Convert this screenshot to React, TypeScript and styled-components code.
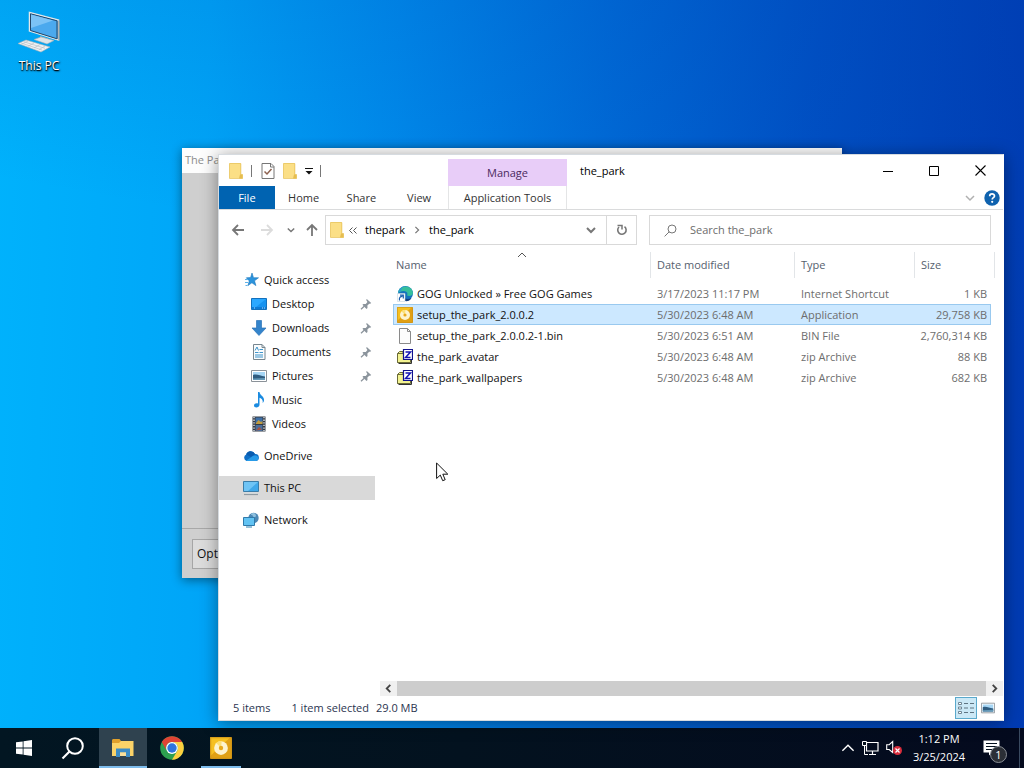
import type { ReactNode } from 'react';
import styled, { createGlobalStyle, css } from 'styled-components';

type IconProps = { size?: number };

const FolderIcon = ({ size = 16 }: IconProps) => (
  <svg width={size} height={size} viewBox="0 0 16 16">
    <path d="M1.500.500H13v11.500h1.500v3.500h-3z" fill="#f6d672" />
    <path d="M1.500.5H12.500v14.500H1.500z" fill="#fbdf86" />
    <path d="M12 11.500h2.500v4H11z" fill="#e6bd50" />
    <path d="M1.500.5H12.800v11h1.700v4H1.500z" fill="none" stroke="#e8c45c" strokeWidth=".8" />
  </svg>
);

const CheckDocIcon = () => (
  <svg width="14" height="16" viewBox="0 0 14 16">
    <path d="M1 .500h9l3 3v12H1z" fill="#fff" stroke="#767676" />
    <path d="M9.500.500v3.500H13" fill="none" stroke="#767676" />
    <path d="M3.500 8.500l2.500 2.500 4.500-5" fill="none" stroke="#8d6250" strokeWidth="1.500" />
  </svg>
);

const CustomizeIcon = () => (
  <svg width="8" height="8" viewBox="0 0 8 8">
    <path d="M0 1.500h8" stroke="#111" />
    <path d="M.500 4h7L4 7.500z" fill="#111" />
  </svg>
);

const MinimizeIcon = () => (
  <svg width="10" height="10" viewBox="0 0 10 10">
    <path d="M0 5.500h10" stroke="#000" />
  </svg>
);

const MaximizeIcon = () => (
  <svg width="10" height="10" viewBox="0 0 10 10">
    <path d="M.500.500h9v9h-9z" fill="none" stroke="#000" />
  </svg>
);

const CloseIcon = () => (
  <svg width="11" height="11" viewBox="0 0 11 11">
    <path d="M.500.500l10 10M10.500.500l-10 10" stroke="#000" strokeWidth="1.100" />
  </svg>
);

const chevrons = {
  down: 'M1 3l4 4 4-4',
  up: 'M1 7l4-4 4 4',
  left: 'M7 1L3 5l4 4',
  right: 'M3 1l4 4-4 4',
};

type ChevronProps = {
  dir: keyof typeof chevrons;
  size?: number;
  color?: string;
  weight?: number;
};

const Chevron = ({ dir, size = 10, color = '#777', weight = 1.5 }: ChevronProps) => (
  <svg width={size} height={size} viewBox="0 0 10 10">
    <path d={chevrons[dir]} fill="none" stroke={color} strokeWidth={weight} />
  </svg>
);

const HelpIcon = () => (
  <svg width="16" height="16" viewBox="0 0 16 16">
    <circle cx="8" cy="8" r="7.700" fill="#0f62ae" />
    <path
      d="M5.700 6.200c0-3 4.800-2.900 4.800-.2 0 1.700-2.300 1.700-2.300 3.500"
      fill="none"
      stroke="#fff"
      strokeWidth="1.700"
    />
    <circle cx="8.200" cy="11.800" r="1.100" fill="#fff" />
  </svg>
);

const ArrowIcon = ({ dir, color }: { dir: 'left' | 'right' | 'up'; color: string }) => {
  const paths = {
    left: 'M13 7H2M7 2L2 7l5 5',
    right: 'M1 7h11M7 2l5 5-5 5',
    up: 'M7 13V2M2 7l5-5 5 5',
  };
  return (
    <svg width="14" height="14" viewBox="0 0 14 14">
      <path d={paths[dir]} fill="none" stroke={color} strokeWidth="1.800" />
    </svg>
  );
};

const DoubleLeftIcon = () => (
  <svg width="8" height="7" viewBox="0 0 8 7">
    <path d="M3.500.500l-3 3 3 3M7.500.500l-3 3 3 3" fill="none" stroke="#555" />
  </svg>
);

const RefreshIcon = () => (
  <svg width="12" height="12" viewBox="0 0 12 12">
    <path d="M3 3a4.200 4.200 0 1 0 5.500-.300" fill="none" stroke="#777" strokeWidth="1.600" />
    <path d="M1.500 1.500H6v4" fill="none" stroke="#777" strokeWidth="1.500" />
  </svg>
);

const SearchIcon = () => (
  <svg width="13" height="13" viewBox="0 0 13 13">
    <circle cx="8" cy="5" r="4" fill="none" stroke="#777" />
    <path d="M5.200 7.800L.600 12.400" stroke="#777" />
  </svg>
);

const StarIcon = () => (
  <svg width="16" height="16" viewBox="0 0 16 16">
    <path
      d="M9 1l1.500 4.700 5 .1-4 3 1.400 4.800-4-2.800-4 2.800 1.400-4.700-3-3.100 4.300-.2z"
      fill="#2b93dc"
      stroke="#1c77bd"
      strokeWidth=".6"
    />
    <path d="M2 7.500h3M2 10.500h3M2.500 13.500h2" stroke="#5fb1e8" />
  </svg>
);

const DesktopIcon = () => (
  <svg width="16" height="16" viewBox="0 0 16 16">
    <path d="M.500 2.500h15v11H.500z" fill="#1793f0" stroke="#1371bd" />
    <path d="M1 11h14v2H1z" fill="#0d7bd6" />
    <path d="M3 12h1M11 12h1M13 12h1" stroke="#b5dcff" />
    <path d="M1 3h14L5 11H1z" fill="#2ba8ff" />
  </svg>
);

const DownloadIcon = () => (
  <svg width="16" height="16" viewBox="0 0 16 16">
    <path d="M5.500.500h5v7.500h4.500L8 15.500 1 8h4.500z" fill="#3484cb" stroke="#2b74b8" strokeWidth=".7" />
  </svg>
);

const DocumentIcon = () => (
  <svg width="16" height="16" viewBox="0 0 16 16">
    <path d="M2.500.500h8.500l3 3v12H2.500z" fill="#fafcfd" stroke="#77868f" />
    <path d="M11 .500v3h3" fill="none" stroke="#77868f" />
    <path d="M4 6.500L6 3l1.500 3.500M8.500 5.500H12M4 8.500h3.500M8.500 8.500H12M4 11h8M4 13h8" fill="none" stroke="#3f94cb" />
  </svg>
);

const PictureIcon = ({ size = 16 }: IconProps) => (
  <svg width={size} height={size} viewBox="0 0 16 16">
    <path d="M.500 2.500h15v11H.500z" fill="#fff" stroke="#8b9299" />
    <path d="M2 4h12v8H2z" fill="#a6d6f5" />
    <path d="M2 7c4-1.500 7 1 12 1.500V12H2z" fill="#2f5c80" />
    <path d="M2 10.500l12-.500v2H2z" fill="#6499b8" />
  </svg>
);

const MusicIcon = () => (
  <svg width="16" height="16" viewBox="0 0 16 16">
    <path
      d="M7 0h1.500c.2 3.300 5 4.200 4.500 8.500-.1 1-.7 2-1.500 2.500 1-3-1.200-4.800-3-5.300v7.100C8.500 16 3 16.500 3 13.500 3 11.500 5.300 10.800 7 11.400z"
      fill="#1b8be0"
    />
  </svg>
);

const VideoIcon = () => (
  <svg width="16" height="16" viewBox="0 0 16 16">
    <path d="M1.500.500h13v15h-13z" fill="#353a42" />
    <path d="M4.500 1.500h7V8h-7z" fill="#3e70a8" />
    <path d="M4.500 9h7v6h-7z" fill="#4b6e9b" />
    <path d="M5 7l2.500-3L10 6l1.500-1v3H5z" fill="#c09a3e" />
    <path d="M5 14.500l3-3.500 3 2.500z" fill="#a8503e" />
    <path d="M3 1v14M13 1v14" stroke="#dfe3e8" strokeWidth="1.400" strokeDasharray="1.300 1.300" />
  </svg>
);

const OneDriveIcon = () => (
  <svg width="16" height="16" viewBox="0 0 16 16">
    <path d="M3.500 13a3.500 3.500 0 0 1-.3-6.500A4.800 4.800 0 0 1 12 6a3.500 3.500 0 0 1 .7 7z" fill="#0f6fc6" />
    <path d="M3.200 6.500A4.800 4.800 0 0 1 12 6L8 9z" fill="#0a5caf" />
    <path d="M3 12.800L8.500 9c2-1.500 5-2.300 6.800.3.800 2-.8 3.700-2.600 3.700H3.500z" fill="#289be8" />
  </svg>
);

const ComputerIcon = () => (
  <svg width="16" height="16" viewBox="0 0 16 16">
    <path d="M.500 1.500h15v10H.500z" fill="#6fc4f5" stroke="#3a7ca8" />
    <path d="M15 2v9H5z" fill="#40a8ea" />
    <path d="M1 14.500h14" stroke="#8f9aa2" strokeWidth="1.200" />
    <path d="M2 13h12" stroke="#d5dde2" />
  </svg>
);

const NetworkIcon = () => (
  <svg width="16" height="16" viewBox="0 0 16 16">
    <circle cx="10.500" cy="6" r="5.200" fill="#4c87b4" />
    <path d="M8 3c3 0 1 2 3.500 2S13 2 11 1C9 .6 8 2 8 3z" fill="#8fc0de" />
    <path d="M.500 5.500H11.500v8H.500z" fill="#62c3f3" stroke="#2f7aab" />
    <path d="M3 15h6" stroke="#6aa7c9" strokeWidth="1.400" />
  </svg>
);

const PinIcon = () => (
  <svg width="12" height="12" viewBox="0 0 12 12">
    <path d="M6.800 1l4.400 4-1 .8-1-.1-1.800 1.900.1 2.400-1 .9L2.400 6.800l1-.9h2.400L7.400 4 6.200 2z" fill="#8b949c" />
    <path d="M4.500 8L1 11.300" stroke="#8b949c" strokeWidth="1.300" />
  </svg>
);

const EdgeShortcutIcon = () => (
  <svg width="16" height="16" viewBox="0 0 16 16">
    <circle cx="8.500" cy="7.500" r="7.500" fill="#1673bd" />
    <path d="M1 7C2-1.500 15-2 16 7c0 3-4 3.500-6 2.500 1.500-3-1-4.500-3.500-4.500C4 5 2 6 1 7z" fill="#37bf9c" />
    <path d="M1 7C2 2 6 0 9 0c-4 1-5 3-4.500 5C3 5.300 2 6 1 7z" fill="#2a9fd0" />
    <path d="M6.500 9c0 4 4 5 8 3-2 3.500-6 4-8.500 2z" fill="#123f80" />
    <path d="M.500 7.500h7.500v8H.500z" fill="#fff" stroke="#c4d3df" strokeWidth=".6" />
    <path d="M2.500 14.500c-.5-3 .5-4.200 3-4.200M3 9.200h3.300v3.300" fill="none" stroke="#1c5fae" strokeWidth="1.200" />
  </svg>
);

const DiscIcon = ({ size = 16 }: IconProps) => (
  <svg width={size} height={size} viewBox="0 0 16 16">
    <rect width="16" height="16" rx="1" fill="#e0a015" />
    <path d="M0 1a1 1 0 0 1 1-1h14L0 14z" fill="#f6c022" />
    <path d="M.500.500h15v15H.500z" fill="none" stroke="#c98f18" strokeWidth=".6" />
    <circle cx="8" cy="8" r="5" fill="#fdf3cf" />
    <path d="M8 8L4.500 4.300A5 5 0 0 1 8.500 3z" fill="#fbe07a" />
    <circle cx="8" cy="8" r="1.600" fill="#e9a91c" />
  </svg>
);

const BlankFileIcon = () => (
  <svg width="16" height="16" viewBox="0 0 16 16">
    <path d="M2.500.500h8l3 3v12h-11z" fill="#fcfcfc" stroke="#8a8a8a" />
    <path d="M10.500.500v3h3" fill="none" stroke="#8a8a8a" />
  </svg>
);

const ZipIcon = () => (
  <svg width="16" height="16" viewBox="0 0 16 16">
    <path d="M.500 4.500l2-2H6v11H.500z" fill="#f0f08c" stroke="#6b6b38" />
    <path d="M.500 4.500H13.500v9H.500z" fill="#f3f392" stroke="#6b6b38" />
    <path d="M14.500 11v3.500h-13" fill="none" stroke="#333" />
    <path d="M6.500.500h9v10h-9z" fill="#fff" stroke="#11118c" strokeWidth="1.200" />
    <path d="M8.500 3h5l-5 5.500h5" fill="none" stroke="#1414b4" strokeWidth="1.500" />
  </svg>
);

const DetailsViewIcon = () => (
  <svg width="16" height="14" viewBox="0 0 16 14">
    <path d="M.500 1.500h3v2h-3zM.500 6h3v2h-3zM.500 10.500h3v2h-3z" fill="#fff" stroke="#6f8796" />
    <path d="M6 2.500h4M12 2.500h4M6 7h4M12 7h4M6 11.500h4M12 11.500h4" stroke="#5e7482" />
  </svg>
);

const BigComputerIcon = () => (
  <svg width="44" height="44" viewBox="0 0 44 44">
    <path d="M12.500 2.500l29 7.500v20l-29-9z" fill="#3b97dc" stroke="#e3e8ea" strokeWidth="1.500" />
    <path d="M13.500 3.800l26.500 7v18L13.500 20.500z" fill="#4ba9ee" stroke="#24486a" />
    <path d="M14 4.500l22 6L14 18z" fill="#7cc3f6" />
    <path d="M42 10.500v20" stroke="#8d9498" strokeWidth="1.200" />
    <path d="M23 26l8 2.500v3l-8-2z" fill="#9fabb4" />
    <path d="M17 29.500l7-2.500 13 3.500-7 3.500z" fill="#dfe5e8" stroke="#a3adb3" strokeWidth=".6" />
    <path d="M1 33.500l8-3.500 24 7-9 5z" fill="#eef1f3" stroke="#a8b0b6" strokeWidth=".6" />
    <path d="M4 33l21 7M7 31.800l21 6.500M11 31l-6 3M17 33l-6 3.300M23 34.500l-6 3.500M28 36l-6 3.700" stroke="#b9c0c6" strokeWidth=".7" />
  </svg>
);

const WindowsIcon = () => (
  <svg width="16" height="16" viewBox="0 0 16 16">
    <path d="M0 2.300L6.700 1.400v6.200H0zM7.500 1.300L16 0v7.600H7.500zM0 8.400h6.700v6.200L0 13.700zM7.500 8.400H16V16l-8.500-1.300z" fill="#fff" />
  </svg>
);

const TaskSearchIcon = () => (
  <svg width="24" height="24" viewBox="0 0 24 24">
    <circle cx="14" cy="10" r="7.800" fill="none" stroke="#fff" strokeWidth="2" />
    <path d="M8.500 15.500L1.500 22.500" stroke="#fff" strokeWidth="2.200" />
  </svg>
);

const ExplorerIcon = () => (
  <svg width="24" height="24" viewBox="0 0 24 24">
    <path d="M1 4.500C1 3.700 1.500 3 2.500 3h6l1.500 2H22v4H1z" fill="#e0a02c" />
    <path d="M1 7h7l2-2h12.500v15H1z" fill="#fbd368" />
    <path d="M5 12.500h14V21h-4v-4.500H9V21H5z" fill="#3c8cc5" />
    <path d="M9 16.500h6V20H9z" fill="#fbe09a" />
  </svg>
);

const ChromeIcon = () => (
  <svg width="24" height="24" viewBox="0 0 24 24">
    <circle cx="12" cy="12" r="11.800" fill="#2d9f4f" />
    <path d="M1.800 6.100A11.800 11.800 0 0 1 22.200 6.100H12a6 6 0 0 0-5.200 9z" fill="#de4334" />
    <path d="M22.200 6.100A11.800 11.800 0 0 1 12 23.800l5.200-8.800A6 6 0 0 0 12 6.100z" fill="#fdcf3e" />
    <circle cx="12" cy="12" r="5.900" fill="#fff" />
    <circle cx="12" cy="12" r="4.700" fill="#2e74dd" />
  </svg>
);

const TrayNetworkIcon = () => (
  <svg width="17" height="15" viewBox="0 0 17 15">
    <path d="M4.500 1.500H16v8.500H4.500z" fill="none" stroke="#fff" strokeWidth="1.200" />
    <path d="M10.500 10v3.500M7 13.500h7" stroke="#fff" strokeWidth="1.200" />
    <path d="M.500.500h4v4h-4z" fill="#06121f" stroke="#fff" />
    <path d="M2.500 4.500v9H6" fill="none" stroke="#fff" />
  </svg>
);

const TrayVolumeIcon = () => (
  <svg width="17" height="16" viewBox="0 0 17 16">
    <path d="M.700 4.700h2.500L6.700 1.500v11L3.200 9.500H.700z" fill="none" stroke="#fff" strokeWidth="1.100" />
    <circle cx="11.500" cy="10.500" r="4.500" fill="#d92d3c" />
    <path d="M9.500 8.500l4 4M13.500 8.500l-4 4" stroke="#fff" strokeWidth="1.200" />
  </svg>
);

const ActionCenterIcon = () => (
  <svg width="17" height="16" viewBox="0 0 17 16">
    <path d="M.500.500h16v12H9l-3 3v-3H.500z" fill="#fff" />
    <path d="M3 3.500h11M3 6.500h11M3 9.500h11" stroke="#06121f" strokeWidth="1.200" />
  </svg>
);

const CursorIcon = () => (
  <svg width="13" height="20" viewBox="0 0 13 20">
    <path d="M.600 1v15.500l3.700-3.400 2.400 5.600 2.500-1-2.400-5.500h5z" fill="#fff" stroke="#111" />
  </svg>
);

type NavEntry = {
  label: string;
  icon: ReactNode;
  nested?: boolean;
  pinned?: boolean;
  active?: boolean;
};

const navGroups: NavEntry[][] = [
  [
    { label: 'Quick access', icon: <StarIcon /> },
    { label: 'Desktop', icon: <DesktopIcon />, nested: true, pinned: true },
    { label: 'Downloads', icon: <DownloadIcon />, nested: true, pinned: true },
    { label: 'Documents', icon: <DocumentIcon />, nested: true, pinned: true },
    { label: 'Pictures', icon: <PictureIcon />, nested: true, pinned: true },
    { label: 'Music', icon: <MusicIcon />, nested: true },
    { label: 'Videos', icon: <VideoIcon />, nested: true },
  ],
  [{ label: 'OneDrive', icon: <OneDriveIcon /> }],
  [{ label: 'This PC', icon: <ComputerIcon />, active: true }],
  [{ label: 'Network', icon: <NetworkIcon /> }],
];

const files = [
  { name: 'GOG Unlocked » Free GOG Games', date: '3/17/2023 11:17 PM', type: 'Internet Shortcut', size: '1 KB', icon: <EdgeShortcutIcon /> },
  { name: 'setup_the_park_2.0.0.2', date: '5/30/2023 6:48 AM', type: 'Application', size: '29,758 KB', icon: <DiscIcon />, selected: true },
  { name: 'setup_the_park_2.0.0.2-1.bin', date: '5/30/2023 6:51 AM', type: 'BIN File', size: '2,760,314 KB', icon: <BlankFileIcon /> },
  { name: 'the_park_avatar', date: '5/30/2023 6:48 AM', type: 'zip Archive', size: '88 KB', icon: <ZipIcon /> },
  { name: 'the_park_wallpapers', date: '5/30/2023 6:48 AM', type: 'zip Archive', size: '682 KB', icon: <ZipIcon /> },
];

const Explorer = () => {
  return (
    <ExplorerWindow>
      <TitleBar>
        <QuickTools>
          <FolderIcon />
          <Divider />
          <PlainButton aria-label="Properties">
            <CheckDocIcon />
          </PlainButton>
          <PlainButton aria-label="New folder">
            <FolderIcon />
          </PlainButton>
          <PlainButton aria-label="Customize toolbar">
            <CustomizeIcon />
          </PlainButton>
          <Divider />
        </QuickTools>
        <ManageTab>Manage</ManageTab>
        <WindowTitle>the_park</WindowTitle>
        <WindowButton aria-label="Minimize">
          <MinimizeIcon />
        </WindowButton>
        <WindowButton aria-label="Maximize">
          <MaximizeIcon />
        </WindowButton>
        <WindowButton aria-label="Close">
          <CloseIcon />
        </WindowButton>
      </TitleBar>

      <Ribbon>
        <RibbonTabs>
          <FileTab>File</FileTab>
          <RibbonTab>Home</RibbonTab>
          <RibbonTab>Share</RibbonTab>
          <RibbonTab>View</RibbonTab>
        </RibbonTabs>
        <ToolsTab>Application Tools</ToolsTab>
        <RibbonEnd>
          <PlainButton aria-label="Expand ribbon">
            <Chevron dir="down" color="#b0b0b0" />
          </PlainButton>
          <PlainButton aria-label="Help">
            <HelpIcon />
          </PlainButton>
        </RibbonEnd>
      </Ribbon>

      <AddressRow>
        <HistoryButtons>
          <PlainButton aria-label="Back">
            <ArrowIcon dir="left" color="#777" />
          </PlainButton>
          <PlainButton aria-label="Forward">
            <ArrowIcon dir="right" color="#dcdcdc" />
          </PlainButton>
          <PlainButton aria-label="Recent locations">
            <Chevron dir="down" size={8} weight={1.8} />
          </PlainButton>
          <PlainButton aria-label="Up">
            <ArrowIcon dir="up" color="#777" />
          </PlainButton>
        </HistoryButtons>
        <AddressBox>
          <FolderIcon />
          <Crumbs>
            <DoubleLeftIcon />
            <a href="#thepark">thepark</a>
            <Chevron dir="right" size={8} />
            <a href="#the_park">the_park</a>
          </Crumbs>
          <AddressButton aria-label="Previous locations">
            <Chevron dir="down" weight={2} />
          </AddressButton>
          <AddressButton aria-label="Refresh" $divided>
            <RefreshIcon />
          </AddressButton>
        </AddressBox>
        <SearchBox>
          <SearchIcon />
          <input type="text" placeholder="Search the_park" />
        </SearchBox>
      </AddressRow>

      <Body>
        <NavPane>
          {navGroups.map((group) => (
            <NavGroup key={group[0].label}>
              {group.map((item) => (
                <NavItem key={item.label} href="#nav" $nested={item.nested} $active={item.active}>
                  {item.icon}
                  <span>{item.label}</span>
                  {item.pinned && <PinIcon />}
                </NavItem>
              ))}
            </NavGroup>
          ))}
        </NavPane>

        <FilePane>
          <FileTable>
            <colgroup>
              <col />
              <col width="144" />
              <col width="120" />
              <col width="77" />
            </colgroup>
            <thead>
              <tr>
                <th>
                  Name
                  <SortMark>
                    <Chevron dir="up" color="#555" weight={1} />
                  </SortMark>
                </th>
                <th>Date modified</th>
                <th>Type</th>
                <th>Size</th>
              </tr>
            </thead>
            <tbody>
              {files.map((file) => (
                <FileRow key={file.name} $selected={file.selected}>
                  <td>
                    <FileName>
                      {file.icon}
                      {file.name}
                    </FileName>
                  </td>
                  <td>{file.date}</td>
                  <td>{file.type}</td>
                  <td>{file.size}</td>
                </FileRow>
              ))}
            </tbody>
          </FileTable>
          <ScrollBar>
            <ScrollButton aria-label="Scroll left">
              <Chevron dir="left" size={9} color="#444" weight={2} />
            </ScrollButton>
            <ScrollThumb />
            <ScrollButton aria-label="Scroll right">
              <Chevron dir="right" size={9} color="#444" weight={2} />
            </ScrollButton>
          </ScrollBar>
        </FilePane>
      </Body>

      <StatusBar>
        <span>5 items</span>
        <Selection>
          <span>1 item selected</span>
          <span>29.0 MB</span>
        </Selection>
        <ViewButton aria-label="Details view" $active>
          <DetailsViewIcon />
        </ViewButton>
        <ViewButton aria-label="Thumbnail view">
          <PictureIcon size={14} />
        </ViewButton>
      </StatusBar>
    </ExplorerWindow>
  );
};

const App = () => {
  return (
    <Screen>
      <GlobalStyle />
      <Desktop>
        <DesktopShortcut href="#this-pc">
          <BigComputerIcon />
          This PC
        </DesktopShortcut>

        <InstallerWindow>
          <InstallerTitle>The Park</InstallerTitle>
          <InstallerBody />
          <InstallerFooter>
            <button>Options</button>
          </InstallerFooter>
        </InstallerWindow>

        <Explorer />
        <Cursor>
          <CursorIcon />
        </Cursor>
      </Desktop>

      <Taskbar>
        <TaskButton aria-label="Start">
          <WindowsIcon />
        </TaskButton>
        <TaskButton aria-label="Search">
          <TaskSearchIcon />
        </TaskButton>
        <TaskApps>
          <TaskButton aria-label="File Explorer" $active>
            <ExplorerIcon />
          </TaskButton>
          <TaskButton aria-label="Chrome">
            <ChromeIcon />
          </TaskButton>
          <TaskButton aria-label="Setup" $running>
            <DiscIcon size={22} />
          </TaskButton>
        </TaskApps>
        <Tray>
          <TrayIcons>
            <PlainButton aria-label="Show hidden icons">
              <Chevron dir="up" size={14} color="#fff" weight={1} />
            </PlainButton>
            <TrayNetworkIcon />
            <TrayVolumeIcon />
          </TrayIcons>
          <Clock>
            <span>1:12 PM</span>
            <span>3/25/2024</span>
          </Clock>
          <ActionCenter aria-label="Notifications">
            <ActionCenterIcon />
            <Badge>1</Badge>
          </ActionCenter>
        </Tray>
      </Taskbar>
    </Screen>
  );
};

export default App;

const GlobalStyle = createGlobalStyle`
  * {
    box-sizing: border-box;
  }

  body {
    margin: 0;
    font-family: 'Open Sans', 'Noto Sans', sans-serif;
    font-size: 11px;
    line-height: 18px;
    color: #111;
  }

  button, input {
    font: inherit;
    color: inherit;
    border: none;
    background: none;
    padding: 0;
  }

  a {
    color: inherit;
    text-decoration: none;
  }

  svg {
    display: block;
    flex: none;
  }
`;

const Screen = styled.div`
  display: flex;
  flex-direction: column;
  height: 100vh;
  overflow: hidden;
  background:
    linear-gradient(190deg, rgba(0, 70, 180, 0.25) 0%, rgba(0, 70, 180, 0) 38%),
    linear-gradient(92deg, #00b2fc 0%, #00a6f8 20%, #008cec 38%, #006cd8 58%, #0050c4 78%, #003ab2 100%);
`;

const Desktop = styled.main`
  position: relative;
  flex: 1;
`;

const DesktopShortcut = styled.a`
  display: flex;
  flex-direction: column;
  align-items: center;
  gap: 3px;
  width: 78px;
  padding-top: 10px;
  color: #fff;
  font-size: 12px;
  text-shadow: 1px 1px 2px #000, 0 1px 1px #000;
`;

const InstallerWindow = styled.section`
  position: absolute;
  top: 148px;
  left: 182px;
  right: 182px;
  height: 430px;
  display: flex;
  flex-direction: column;
  background: #cfcfcf;
  box-shadow: 0 2px 10px rgba(0, 0, 0, 0.45);
`;

const InstallerTitle = styled.header`
  height: 25px;
  padding: 3px;
  background: #fdfdfd;
  color: #8c8c8c;
`;

const InstallerBody = styled.div`
  flex: 1;
`;

const InstallerFooter = styled.footer`
  height: 50px;
  padding: 10px;
  border-top: 1px solid #a8a8a8;

  button {
    height: 30px;
    padding: 0 4px;
    border: 1px solid #a6a6a6;
    background: #dcdcdc;
    font-size: 12px;
  }
`;

const ExplorerWindow = styled.section`
  position: absolute;
  inset: 154px 20px 7px 218px;
  display: flex;
  flex-direction: column;
  border: 1px solid #d6dbe0;
  border-right-color: #fff;
  background: #fff;
  box-shadow: 0 2px 16px rgba(0, 0, 0, 0.4);
`;

const PlainButton = styled.button`
  display: flex;
  align-items: center;
  justify-content: center;
`;

const TitleBar = styled.header`
  display: flex;
  height: 31px;
`;

const QuickTools = styled.div`
  display: flex;
  align-items: center;
  gap: 7px;
  width: 229px;
  padding-left: 9px;
`;

const Divider = styled.i`
  width: 1px;
  height: 12px;
  margin-right: 2px;
  background: #777;
`;

const ManageTab = styled.div`
  align-self: flex-end;
  width: 119px;
  height: 27px;
  line-height: 28px;
  text-align: center;
  background: #e8cdf8;
  color: #4b2a5e;
`;

const WindowTitle = styled.div`
  flex: 1;
  padding-left: 13px;
  line-height: 32px;
  color: #000;
`;

const WindowButton = styled(PlainButton)`
  width: 46px;
`;

const Ribbon = styled.nav`
  display: flex;
  height: 24px;
  border-bottom: 1px solid #dadbdc;
`;

const RibbonTabs = styled.div`
  display: flex;
  width: 229px;
`;

const RibbonTab = styled.button`
  width: 58px;
  color: #333;
`;

const FileTab = styled(RibbonTab)`
  width: 56px;
  background: #0063b1;
  color: #fff;
`;

const ToolsTab = styled.button`
  width: 119px;
  border: solid #e4e5e6;
  border-width: 0 1px;
  color: #333;
`;

const RibbonEnd = styled.div`
  display: flex;
  align-items: center;
  gap: 9px;
  margin-left: auto;
  padding-right: 3px;
`;

const AddressRow = styled.div`
  display: flex;
  align-items: center;
  height: 40px;
  padding-right: 12px;
`;

const HistoryButtons = styled.div`
  display: grid;
  grid-template-columns: 30px 28px 20px 22px;
  align-items: center;
  width: 106px;
  padding-left: 4px;
`;

const AddressBox = styled.div`
  display: flex;
  align-items: center;
  flex: 0 0 312px;
  height: 30px;
  padding-left: 3px;
  border: 1px solid #d9d9d9;
`;

const Crumbs = styled.div`
  display: flex;
  align-items: center;
  flex: 1;
  gap: 8px;
  padding-left: 4px;
  color: #000;
`;

const AddressButton = styled(PlainButton)<{ $divided?: boolean }>`
  align-self: stretch;
  width: 30px;
  ${({ $divided }) => $divided && 'border-left: 1px solid #d9d9d9;'}
`;

const SearchBox = styled.label`
  display: flex;
  align-items: center;
  flex: 1;
  gap: 13px;
  height: 30px;
  margin-left: 12px;
  padding-left: 14px;
  border: 1px solid #d9d9d9;

  input {
    flex: 1;
    min-width: 0;
    outline: none;
  }

  input::placeholder {
    color: #6d6d6d;
    opacity: 1;
  }
`;

const Body = styled.div`
  display: flex;
  flex: 1;
  min-height: 0;
`;

const NavPane = styled.nav`
  width: 156px;
  padding-top: 18px;
`;

const NavGroup = styled.div`
  margin-bottom: 8px;
`;

const NavItem = styled.a<{ $nested?: boolean; $active?: boolean }>`
  display: flex;
  align-items: center;
  gap: 5px;
  height: 24px;
  padding-left: ${({ $nested }) => ($nested ? 32 : 24)}px;
  padding-right: 3px;
  background: ${({ $active }) => ($active ? '#d9d9d9' : 'transparent')};

  span {
    flex: 1;
  }
`;

const FilePane = styled.div`
  display: flex;
  flex-direction: column;
  flex: 1;
  margin-left: 5px;
`;

const FileTable = styled.table`
  table-layout: fixed;
  width: calc(100% - 25px);
  margin-left: 13px;
  border-collapse: collapse;

  th {
    position: relative;
    height: 33px;
    padding: 0 0 3px 7px;
    font-weight: 400;
    text-align: left;
    color: #56616e;
  }

  th:first-child {
    padding-left: 3px;
  }

  th:not(:first-child)::before,
  th:last-child::after {
    content: '';
    position: absolute;
    top: 2px;
    left: 0;
    width: 1px;
    height: 26px;
    background: #e2e5e8;
  }

  th:last-child::after {
    left: auto;
    right: -4px;
  }
`;

const SortMark = styled.span`
  position: absolute;
  top: 0;
  left: 50%;
  transform: translateX(-50%);
`;

const FileRow = styled.tr<{ $selected?: boolean }>`
  height: 21px;

  ${({ $selected }) =>
    $selected &&
    css`
      background: #cce8ff;
      outline: 1px solid #99c9ef;
      outline-offset: -1px;
    `}

  td {
    padding: 0 0 0 7px;
    color: #6d6d6d;
    white-space: nowrap;
  }

  td:first-child {
    padding-left: 4px;
    color: #111;
  }

  td:last-child {
    padding-left: 0;
    padding-right: 4px;
    text-align: right;
  }
`;

const FileName = styled.div`
  display: flex;
  align-items: center;
  gap: 4px;
`;

const ScrollBar = styled.div`
  display: flex;
  height: 15px;
  margin-top: auto;
  background: #f0f0f0;
`;

const ScrollButton = styled(PlainButton)`
  width: 17px;
`;

const ScrollThumb = styled.div`
  flex: 1;
  background: #cdcdcd;
`;

const StatusBar = styled.footer`
  display: flex;
  align-items: center;
  height: 24px;
  padding: 0 4px 0 14px;
  color: #2b3550;
`;

const Selection = styled.div`
  display: flex;
  flex: 1;
  gap: 7px;
  margin-left: 21px;
`;

const ViewButton = styled(PlainButton)<{ $active?: boolean }>`
  width: 22px;
  height: 22px;

  ${({ $active }) =>
    $active &&
    css`
      border: 1px solid #5aa9cc;
      background: #cbe8f6;
    `}
`;

const Cursor = styled.div`
  position: absolute;
  top: 462px;
  left: 436px;
  pointer-events: none;
`;

const Taskbar = styled.footer`
  display: flex;
  gap: 1px;
  height: 40px;
  background: linear-gradient(90deg, #021622 0%, #03121f 45%, #040a1e 100%);
  color: #fff;
`;

const TaskButton = styled.button<{ $active?: boolean; $running?: boolean }>`
  display: flex;
  position: relative;
  align-items: center;
  justify-content: center;
  width: 48px;
  background: ${({ $active }) => ($active ? '#2f424f' : 'transparent')};

  &::after {
    content: '';
    position: absolute;
    bottom: 0;
    left: ${({ $active }) => ($active ? 0 : 4)}px;
    right: ${({ $active }) => ($active ? 0 : 4)}px;
    height: 2px;
    background: ${({ $active, $running }) => ($active || $running ? '#7dbcec' : 'transparent')};
  }
`;

const TaskApps = styled.div`
  display: flex;
  gap: 1px;
  margin-left: 1px;
`;

const Tray = styled.div`
  display: flex;
  align-items: center;
  gap: 4px;
  margin-left: auto;
  margin-right: 4px;
  padding-right: 8px;
  border-right: 1px solid #3a4a60;
`;

const TrayIcons = styled.div`
  display: flex;
  align-items: center;
  gap: 7px;
  padding-right: 4px;
`;

const Clock = styled.div`
  display: flex;
  flex-direction: column;
  align-items: center;
  width: 56px;
`;

const ActionCenter = styled(PlainButton)`
  position: relative;
  width: 40px;
  height: 40px;
`;

const Badge = styled.span`
  position: absolute;
  left: 19px;
  top: 18px;
  width: 17px;
  height: 17px;
  border: 1px solid #8a8f96;
  border-radius: 50%;
  background: #2b2f36;
  line-height: 15px;
`;
